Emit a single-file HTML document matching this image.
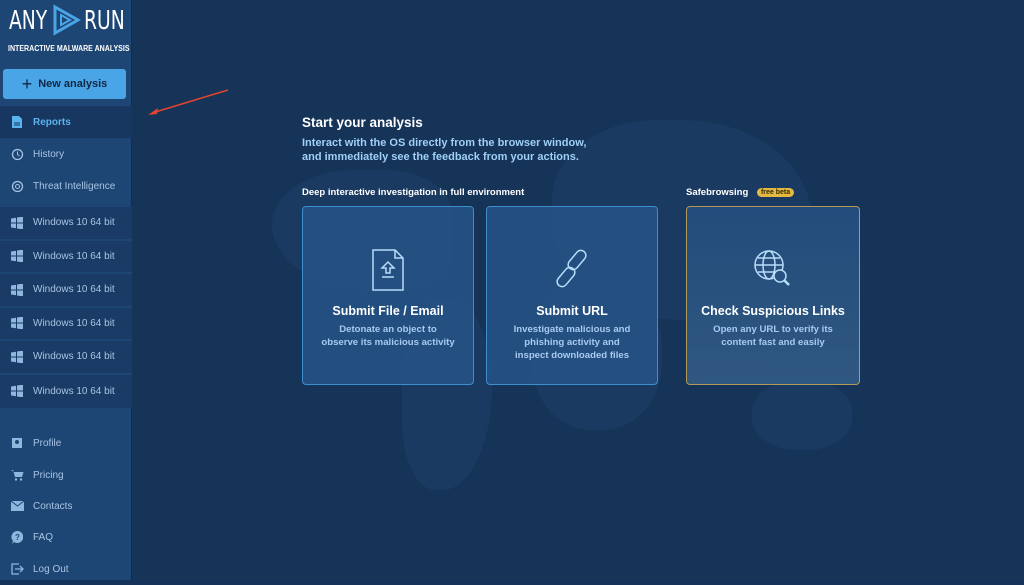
<!DOCTYPE html>
<html><head><meta charset="utf-8"><style>
*{margin:0;padding:0;box-sizing:border-box}
body{width:1024px;height:580px;overflow:hidden;background:#15325a;font-family:"Liberation Sans",sans-serif;position:relative}
#main{position:absolute;left:132px;top:0;width:892px;height:580px;background:#163358;overflow:hidden}
.blob{position:absolute;background:#1b3a61;border-radius:45%}
#side{position:absolute;left:0;top:0;width:132px;height:580px;background:#1e4675;border-right:1px solid #132c4d}
.lt{position:absolute;color:#fff;font-family:"DejaVu Sans",sans-serif;font-size:26px;line-height:30px;white-space:nowrap;transform-origin:left top;transform:scaleX(.72)}
.btn{position:absolute;left:3px;top:69px;width:123px;height:30px;background:#4aa5e6;border-radius:3px;color:#0f2745;font-weight:bold;font-size:11px;display:flex;align-items:center;justify-content:center;gap:6px}
.it{position:absolute;left:0;width:132px;height:32px;display:flex;align-items:center;color:#a9c4e2;font-size:10px}
.it svg{position:absolute;left:11px}
.it span{position:absolute;left:33px}
.win{background:#193b66;border-bottom:2px solid #1e4675;height:33.5px}
.h{position:absolute;color:#fff}
.card{position:absolute;top:206px;height:179px;border:1px solid #3d8ed0;border-radius:4px;background:rgba(38,84,135,.85);text-align:center;color:#fff}
.card b{display:block;position:absolute;top:97px;width:100%;font-size:12.5px}
.card p{position:absolute;top:116px;width:100%;font-size:9.6px;line-height:13px;color:#a8cbf0;font-weight:bold}
.card svg{position:absolute;left:50%;top:42px;transform:translateX(-50%)}
</style></head><body>
<div id="main">
<div class="blob" style="left:140px;top:170px;width:180px;height:120px;border-radius:50% 40% 30% 60%"></div>
<div class="blob" style="left:270px;top:300px;width:90px;height:190px;border-radius:40% 50% 60% 40%"></div>
<div class="blob" style="left:420px;top:120px;width:260px;height:200px;border-radius:40% 50% 40% 50%"></div>
<div class="blob" style="left:400px;top:280px;width:130px;height:150px"></div>
<div class="blob" style="left:620px;top:380px;width:100px;height:70px"></div>
</div>
<svg style="position:absolute;left:140px;top:88px" width="95" height="30"><line x1="88" y1="2" x2="12" y2="25" stroke="#e2442f" stroke-width="1.5"/><path d="M8 27 L18 20 L17 26 Z" fill="#e2442f"/></svg>
<div id="side">
<div class="lt" style="left:9px;top:6px">ANY</div>
<svg style="position:absolute;left:51px;top:4px" width="30" height="32"><path d="M4 3 L27 16 L4 29 Z" fill="none" stroke="#4aa5e6" stroke-width="3"/><path d="M10 11 L19 16 L10 21Z" fill="none" stroke="#4aa5e6" stroke-width="2"/></svg>
<div class="lt" style="left:84px;top:6px">RUN</div>
<div style="position:absolute;left:8px;top:44px;color:#fff;font-size:8px;font-weight:bold;white-space:nowrap;transform-origin:left top;transform:scaleX(.88)">INTERACTIVE MALWARE ANALYSIS</div>
<div class="btn"><span style="font-size:18px;font-weight:normal">+</span>New analysis</div>
<div class="it" style="top:106px;background:#173760;color:#5ab3ee;font-weight:bold"><svg width="12" height="14"><path d="M1 1h7l3 3v9H1z" fill="#5ab3ee"/><path d="M3 8h6M3 10h6" stroke="#173760"/></svg><span>Reports</span></div>
<div class="it" style="top:138px"><svg width="13" height="13"><circle cx="6.5" cy="6.5" r="5" fill="none" stroke="#a9c4e2" stroke-width="1.3"/><path d="M6.5 3.5v3l2 1.5" stroke="#a9c4e2" fill="none"/></svg><span>History</span></div>
<div class="it" style="top:170px"><svg width="13" height="13"><circle cx="6.5" cy="6.5" r="5" fill="none" stroke="#a9c4e2" stroke-width="1.3"/><circle cx="6.5" cy="6.5" r="2" fill="none" stroke="#a9c4e2"/></svg><span>Threat Intelligence</span></div>
<div style="position:absolute;top:207px;left:0;width:132px;height:201px;background:#193b66"></div>
<div class="it win" style="top:207px"><svg width="12" height="12"><path d="M0 1.5l5-.8v4.8H0zM6 .5l6-1v6H6zM0 6.5h5v4.8l-5-.8zM6 6.5h6v6l-6-1z" fill="#8fb6dd"/></svg><span>Windows 10 64 bit</span></div>
<div class="it win" style="top:240.5px"><svg width="12" height="12"><path d="M0 1.5l5-.8v4.8H0zM6 .5l6-1v6H6zM0 6.5h5v4.8l-5-.8zM6 6.5h6v6l-6-1z" fill="#8fb6dd"/></svg><span>Windows 10 64 bit</span></div>
<div class="it win" style="top:274px"><svg width="12" height="12"><path d="M0 1.5l5-.8v4.8H0zM6 .5l6-1v6H6zM0 6.5h5v4.8l-5-.8zM6 6.5h6v6l-6-1z" fill="#8fb6dd"/></svg><span>Windows 10 64 bit</span></div>
<div class="it win" style="top:307.5px"><svg width="12" height="12"><path d="M0 1.5l5-.8v4.8H0zM6 .5l6-1v6H6zM0 6.5h5v4.8l-5-.8zM6 6.5h6v6l-6-1z" fill="#8fb6dd"/></svg><span>Windows 10 64 bit</span></div>
<div class="it win" style="top:341px"><svg width="12" height="12"><path d="M0 1.5l5-.8v4.8H0zM6 .5l6-1v6H6zM0 6.5h5v4.8l-5-.8zM6 6.5h6v6l-6-1z" fill="#8fb6dd"/></svg><span>Windows 10 64 bit</span></div>
<div class="it win" style="top:374.5px;border:none"><svg width="12" height="12"><path d="M0 1.5l5-.8v4.8H0zM6 .5l6-1v6H6zM0 6.5h5v4.8l-5-.8zM6 6.5h6v6l-6-1z" fill="#8fb6dd"/></svg><span>Windows 10 64 bit</span></div>
<div class="it" style="top:427px"><svg width="12" height="12"><rect x="1" y="1" width="10" height="10" fill="#8fb6dd"/><circle cx="6" cy="5" r="2" fill="#1e4675"/></svg><span>Profile</span></div>
<div class="it" style="top:459px"><svg width="13" height="12"><path d="M0 1h2l2 7h7l1.5-5H3" fill="#8fb6dd"/><circle cx="5" cy="10.5" r="1.2" fill="#8fb6dd"/><circle cx="10" cy="10.5" r="1.2" fill="#8fb6dd"/></svg><span>Pricing</span></div>
<div class="it" style="top:490px"><svg width="13" height="10"><rect width="13" height="10" fill="#8fb6dd"/><path d="M0 0l6.5 5L13 0" stroke="#1e4675" fill="none"/></svg><span>Contacts</span></div>
<div class="it" style="top:521px"><svg width="12" height="13"><path d="M6 0a6 6 0 1 1-3 11L1 13l1-3A6 6 0 0 1 6 0z" fill="#8fb6dd"/><text x="4" y="9" font-size="8" font-weight="bold" fill="#1e4675">?</text></svg><span>FAQ</span></div>
<div class="it" style="top:553px"><svg width="13" height="12"><path d="M8 1H1v10h7" fill="none" stroke="#8fb6dd" stroke-width="1.3"/><path d="M4 6h8M9 3l3 3-3 3" fill="none" stroke="#8fb6dd" stroke-width="1.3"/></svg><span>Log Out</span></div>
</div>
<div class="h" style="left:302px;top:115px;font-size:13.5px;font-weight:bold">Start your analysis</div>
<div class="h" style="left:302px;top:137px;font-size:11px;line-height:13.5px;color:#9fd0f7;font-weight:bold">Interact with the OS directly from the browser window,<br>and immediately see the feedback from your actions.</div>
<div class="h" style="left:302px;top:187px;font-size:9.5px;font-weight:bold">Deep interactive investigation in full environment</div>
<div class="h" style="left:686px;top:187px;font-size:9.5px;font-weight:bold">Safebrowsing <span style="background:#e3b93f;color:#3a2d08;font-size:7px;padding:1px 4px;border-radius:6px;margin-left:6px;vertical-align:1px">free beta</span></div>
<div class="card" style="left:302px;width:172px"><svg width="34" height="42" viewBox="0 0 34 42"><path d="M2 1h22l8 8v32H2z M24 1v8h8" fill="none" stroke="#b8dcfa" stroke-width="1.5"/><path d="M17 13l-6 6h4v5h4v-5h4z M11 28h12" fill="none" stroke="#b8dcfa" stroke-width="1.5"/></svg><b>Submit File / Email</b><p>Detonate an object to<br>observe its malicious activity</p></div>
<div class="card" style="left:486px;width:172px"><svg width="40" height="40" viewBox="0 0 40 40"><g fill="none" stroke="#b8dcfa" stroke-width="1.5"><rect x="20" y="0" width="10" height="22" rx="5" transform="rotate(40 25 11)"/><rect x="9" y="17" width="10" height="22" rx="5" transform="rotate(40 14 28)"/></g></svg><b>Submit URL</b><p>Investigate malicious and<br>phishing activity and<br>inspect downloaded files</p></div>
<div class="card" style="left:686px;width:174px;border-color:#b49a5a;background:linear-gradient(#234c7c,#2f577f)"><svg width="40" height="40" viewBox="0 0 40 40"><g fill="none" stroke="#b8dcfa" stroke-width="1.5"><circle cx="16" cy="16" r="14"/><ellipse cx="16" cy="16" rx="6" ry="14"/><path d="M2 16h28M5 9h22M5 23h22"/><circle cx="27" cy="27" r="6" fill="#2a5280"/><path d="M31 31l5 5" stroke-width="2.5"/></g></svg><b>Check Suspicious Links</b><p>Open any URL to verify its<br>content fast and easily</p></div>
</body></html>
